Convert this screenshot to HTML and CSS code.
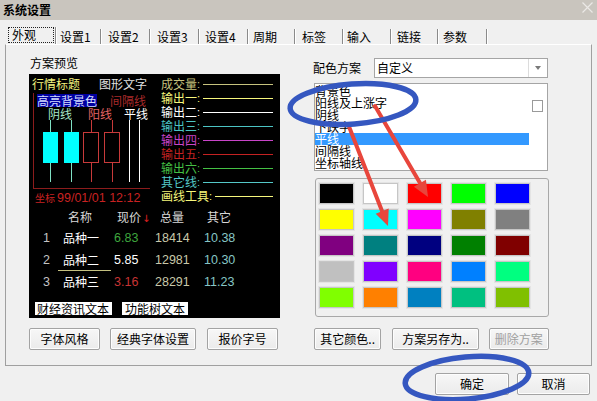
FILE: index.html
```html
<!DOCTYPE html>
<html lang="zh">
<head>
<meta charset="utf-8">
<title>系统设置</title>
<link rel="stylesheet" href="styles.css">
</head>
<body>
<div class="win">
  <div class="titlebar">
    <span class="title">系统设置</span>
    <svg class="close" width="11" height="11" viewBox="0 0 11 11"><path d="M0.5 0.5 L10.5 10.5 M10.5 0.5 L0.5 10.5" stroke="#ebe9e6" stroke-width="1.2" fill="none"/></svg>
  </div>

  <div class="tabs">
    <div class="tab sel"><span class="focus">外观</span></div>
    <div class="tab w45">设置1</div>
    <div class="tab w49 p7">设置2</div>
    <div class="tab w49 p7">设置3</div>
    <div class="tab w49">设置4</div>
    <div class="tab w47 p5">周期</div>
    <div class="tab w48 p7">标签</div>
    <div class="tab w48 p4">输入</div>
    <div class="tab w47">链接</div>
    <div class="tab w49 p5">参数</div>
  </div>

  <div class="panel">
    <div class="col left">
      <div class="lbl">方案预览</div>
      <div class="preview">
        <div class="top">
          <div class="chartcol">
            <div class="hdr"><span class="t1">行情标题</span><span class="t2">图形文字</span></div>
            <div class="frame">
              <div class="frow1"><span class="hl">高亮背景色</span><span class="gapl">间隔线</span></div>
              <div class="frow2"><span class="yin">阴线</span><span class="yang">阳线</span><span class="ping">平线</span></div>
              <svg class="candles" width="116" height="67" viewBox="0 0 116 67">
                <g stroke="#7fe0c4" stroke-width="1">
                  <line x1="16.5" y1="0" x2="16.5" y2="62"/>
                  <line x1="37.5" y1="0" x2="37.5" y2="62"/>
                </g>
                <rect x="9" y="12" width="15" height="31" fill="#00ffff"/>
                <rect x="30" y="12" width="15" height="31" fill="#00ffff"/>
                <g stroke="#c83a3a" stroke-width="1" fill="none">
                  <line x1="57.5" y1="0" x2="57.5" y2="12"/>
                  <line x1="57.5" y1="43" x2="57.5" y2="62"/>
                  <line x1="78.5" y1="0" x2="78.5" y2="12"/>
                  <line x1="78.5" y1="43" x2="78.5" y2="62"/>
                  <rect x="49.5" y="12.5" width="15" height="30"/>
                  <rect x="70.5" y="12.5" width="15" height="30"/>
                </g>
                <g stroke="#ffffff" stroke-width="1">
                  <line x1="95.5" y1="0" x2="95.5" y2="62"/>
                  <line x1="105.5" y1="0" x2="105.5" y2="62"/>
                </g>
              </svg>
            </div>
            <div class="coord"><span class="zb">坐标</span><span class="num">99/01/01 12:12</span></div>
          </div>
          <div class="legend">
            <div class="lrow c-vol"><span>成交量</span><span class="colon">:</span><span class="ln"></span></div>
            <div class="lrow c-o1"><span>输出一</span><span class="colon">:</span><span class="ln"></span></div>
            <div class="lrow c-o2"><span>输出二</span><span class="colon">:</span><span class="ln"></span></div>
            <div class="lrow c-o3"><span>输出三</span><span class="colon">:</span><span class="ln"></span></div>
            <div class="lrow c-o4"><span>输出四</span><span class="colon">:</span><span class="ln"></span></div>
            <div class="lrow c-o5"><span>输出五</span><span class="colon">:</span><span class="ln"></span></div>
            <div class="lrow c-o6"><span>输出六</span><span class="colon">:</span><span class="ln"></span></div>
            <div class="lrow c-oth"><span>其它线</span><span class="colon">:</span><span class="ln"></span></div>
            <div class="lrow c-draw"><span>画线工具</span><span class="colon">:</span><span class="ln"></span></div>
          </div>
        </div>

        <div class="tbl">
          <div></div>
          <div class="h hn">名称</div>
          <div class="h hp">现价<span class="down">↓</span></div>
          <div class="h hv">总量</div>
          <div class="h ho">其它</div>

          <div class="idx num">1</div>
          <div class="nm">品种一</div>
          <div class="num pr up">6.83</div>
          <div class="num vol">18414</div>
          <div class="num oth">10.38</div>

          <div class="idx num">2</div>
          <div class="nm cur">品种二</div>
          <div class="num pr eq">5.85</div>
          <div class="num vol">12981</div>
          <div class="num oth">10.30</div>

          <div class="idx num">3</div>
          <div class="nm">品种三</div>
          <div class="num pr dn">3.16</div>
          <div class="num vol">28291</div>
          <div class="num oth">11.23</div>
        </div>

        <div class="labels"><span class="tag1">财经资讯文本</span><span class="tag2">功能树文本</span></div>
      </div>
      <div class="btns">
        <button class="btn b71">字体风格</button>
        <button class="btn b86 ml10">经典字体设置</button>
        <button class="btn b71 ml11">报价字号</button>
      </div>
    </div>

    <div class="col right">
      <div class="scheme">
        <span class="slab">配色方案</span>
        <div class="combo"><span class="val">自定义</span><span class="dd"><span class="arrow"></span></span></div>
      </div>
      <div class="list">
        <div class="items">
          <div>背景色</div>
          <div>阳线及上涨字</div>
          <div>阴线</div>
          <div>下跌字</div>
          <div class="on">平线</div>
          <div>间隔线</div>
          <div>坐标轴线</div>
        </div>
        <div class="chk"></div>
      </div>
      <div class="colors">
        <span class="sw" style="background:#000000"></span>
        <span class="sw" style="background:#ffffff"></span>
        <span class="sw" style="background:#ff0000"></span>
        <span class="sw" style="background:#00ff00"></span>
        <span class="sw" style="background:#0000ff"></span>
        <span class="sw" style="background:#ffff00"></span>
        <span class="sw" style="background:#00ffff"></span>
        <span class="sw" style="background:#ff00ff"></span>
        <span class="sw" style="background:#808000"></span>
        <span class="sw" style="background:#808080"></span>
        <span class="sw" style="background:#800080"></span>
        <span class="sw" style="background:#008080"></span>
        <span class="sw" style="background:#000080"></span>
        <span class="sw" style="background:#008000"></span>
        <span class="sw" style="background:#800000"></span>
        <span class="sw" style="background:#c0c0c0"></span>
        <span class="sw" style="background:#8000ff"></span>
        <span class="sw" style="background:#ff0080"></span>
        <span class="sw" style="background:#0080ff"></span>
        <span class="sw" style="background:#00ff80"></span>
        <span class="sw" style="background:#80ff00"></span>
        <span class="sw" style="background:#ff8000"></span>
        <span class="sw" style="background:#0080c0"></span>
        <span class="sw" style="background:#00c080"></span>
        <span class="sw" style="background:#80c000"></span>
      </div>
      <div class="btns rb">
        <button class="btn b68">其它颜色..</button>
        <button class="btn b87 ml11">方案另存为..</button>
        <button class="btn b61 ml10 dis">删除方案</button>
      </div>
    </div>
  </div>

  <div class="footer">
    <button class="btn b74">确定</button>
    <button class="btn b73">取消</button>
  </div>

  <svg class="annot" width="597" height="401" viewBox="0 0 597 401">
    <g stroke="#e8463c" stroke-width="4" stroke-linecap="round" fill="none">
      <line x1="348" y1="124" x2="382" y2="211"/>
      <line x1="375" y1="106" x2="420" y2="183"/>
    </g>
    <g fill="#e8463c">
      <polygon points="388,226 388.7,208.5 375.7,213.7"/>
      <polygon points="428,197 425.9,179.7 413.9,186.7"/>
    </g>
    <g fill="none" stroke="#3557c0" stroke-width="5.5">
      <ellipse cx="353" cy="104" rx="63" ry="20" transform="rotate(-4 353 104)"/>
      <ellipse cx="467" cy="378" rx="62" ry="21" transform="rotate(-5 467 378)"/>
    </g>
  </svg>
</div>
</body>
</html>
```

FILE: styles.css
```css
* { box-sizing: border-box; }
html, body { margin: 0; padding: 0; }
body {
  width: 597px;
  height: 401px;
  overflow: hidden;
  background: #f0f0f0;
  font-family: "Noto Sans CJK SC", sans-serif;
  font-size: 12px;
  line-height: 14px;
  color: #000;
}
.win { position: relative; width: 597px; height: 401px; }

/* title bar */
.titlebar {
  height: 20px;
  background: #c9c5be;
  display: flex;
  justify-content: space-between;
  padding: 0 4px 0 3px;
}
.title { font-weight: bold; line-height: 19px; }
.close { margin-top: 2px; }

/* tabs */
.tabs {
  height: 24px;
  display: flex;
  align-items: flex-end;
  padding-left: 7px;
}
.tab {
  height: 15px;
  line-height: 15px;
  padding-left: 6px;
  border-right: 1px solid #8a8a8a;
  box-shadow: 1px 0 0 #ffffff;
  white-space: nowrap;
}
.tab.p4 { padding-left: 4px; }
.tab.p5 { padding-left: 5px; }
.tab.p7 { padding-left: 7px; }
.tab.w45 { width: 45px; padding-left: 4px; }
.tab.w47 { width: 47px; }
.tab.w48 { width: 48px; }
.tab.w49 { width: 49px; }
.tab.sel {
  width: 49px;
  height: 17px;
  padding: 0 0 0 1px;
}
.focus {
  display: block;
  width: 46px;
  height: 16px;
  line-height: 14px;
  border: 1px dotted #222;
  padding-left: 3px;
}

/* panel */
.panel {
  margin-left: 5px;
  width: 587px;
  height: 322px;
  border: 1px solid #a0a0a0;
  border-top-color: #ffffff;
  padding: 11px 0 0 23px;
  display: flex;
  gap: 33px;
}
.col { display: flex; flex-direction: column; }
.left { width: 251px; }
.right { width: 236px; }
.lbl { line-height: 14px; padding-left: 1px; margin-bottom: 4px; }

/* preview */
.preview {
  height: 244px;
  background: #000;
  padding: 3px 0 0 3px;
  display: flex;
  flex-direction: column;
}
.num { font-family: "Liberation Sans", Arial, sans-serif; font-size: 12.5px; }
.top { display: flex; height: 126px; }
.chartcol { width: 129px; display: flex; flex-direction: column; }
.hdr { height: 14px; line-height: 14px; display: flex; white-space: nowrap; }
.hdr .t1 { color: #f2f27e; }
.hdr .t2 { color: #e2e2e2; margin-left: 19px; }
.frame {
  margin: 2px 0 0 1px;
  width: 117px;
  height: 96px;
  border-left: 1px solid #8c1c1c;
  border-bottom: 1px solid #8c1c1c;
  display: flex;
  flex-direction: column;
}
.frow1 { margin-top: 1px; height: 13px; line-height: 13px; display: flex; white-space: nowrap; }
.hl { margin-left: 3px; background: #0000a0; color: #d4dcff; }
.gapl { margin-left: 13px; color: #a82a2a; }
.frow2 { height: 13px; line-height: 13px; display: flex; white-space: nowrap; }
.yin { margin-left: 14px; color: #a6e6c8; }
.yang { margin-left: 16px; color: #e46464; }
.ping { margin-left: 12px; color: #ffffff; }
.candles { display: block; }
.coord {
  margin: 1px 0 0 3px;
  height: 13px;
  line-height: 13px;
  color: #c82222;
  white-space: nowrap;
}
.coord .zb { font-size: 10px; }
.coord .num { margin-left: 2px; }

.legend { flex: 1; display: flex; flex-direction: column; }
.lrow { height: 14px; line-height: 14px; display: flex; align-items: center; white-space: nowrap; }
.colon { font-family: "Liberation Sans", Arial, sans-serif; font-size: 11px; }
.ln { flex: 1; height: 1px; background: currentColor; margin: 0 7px 0 3px; }
.c-vol { color: #c6c27e; }
.c-o1 { color: #f6f67c; }
.c-o2 { color: #ffffff; }
.c-o3 { color: #4cc4c4; }
.c-o4 { color: #c844c8; }
.c-o5 { color: #c42222; }
.c-o6 { color: #44c044; }
.c-oth { color: #54c8c8; }
.c-draw { color: #f6f67c; }

.tbl {
  margin-top: 7px;
  display: grid;
  grid-template-columns: 20px 51px 39px 51px 1fr;
  grid-template-rows: 21px 22px 22px 22px;
  padding-left: 11px;
  line-height: 14px;
  white-space: nowrap;
}
.h { color: #d8d8d8; }
.hn { padding-left: 5px; }
.hp { padding-left: 3px; }
.hv { padding-left: 7px; }
.ho { padding-left: 3px; }
.down { color: #e02020; font-family: "DejaVu Sans", sans-serif; font-size: 10px; margin-left: 1px; }
.idx { color: #c4c4c4; }
.nm { color: #ffffff; }
.nm.cur {
  margin-left: -5px;
  padding-left: 5px;
  width: 53px;
  height: 18px;
  border-bottom: 1px solid #c4c080;
}
.pr.up { color: #3ea63e; }
.pr.eq { color: #ffffff; }
.pr.dn { color: #c83434; }
.vol { color: #c8c8aa; padding-left: 2px; }
.oth { color: #86c6c6; }

.labels { margin-top: 5px; display: flex; gap: 10px; padding-left: 3px; white-space: nowrap; }
.labels span {
  background: #ffffff;
  color: #000;
  height: 13px;
  line-height: 13px;
}
.tag1 { width: 77px; padding-left: 2px; }
.tag2 { width: 66px; padding-left: 3px; }

/* buttons */
.btns { margin-top: 10px; display: flex; }
.rb { margin-top: 11px; margin-left: 1px; }
.btn {
  height: 22px;
  padding: 0;
  font-family: "Noto Sans CJK SC", sans-serif;
  font-size: 12px;
  line-height: 18px;
  color: #000;
  background: linear-gradient(#f7f7f7, #ebebeb);
  border: 1px solid #a3a3a3;
  border-radius: 2px;
  box-shadow: inset 0 0 0 1px #fdfdfd;
  white-space: nowrap;
}
.btn.dis { color: #a0a0a0; }
.b61 { width: 61px; }
.b68 { width: 68px; }
.b71 { width: 71px; }
.b73 { width: 73px; }
.b74 { width: 74px; }
.b86 { width: 86px; }
.b87 { width: 87px; }
.ml10 { margin-left: 10px; }
.ml11 { margin-left: 11px; }

/* right column */
.scheme { margin-top: 2px; height: 20px; display: flex; align-items: center; }
.slab { width: 61px; line-height: 14px; }
.combo {
  width: 174px;
  height: 20px;
  border: 1px solid #a5a5a5;
  background: #fff;
  display: flex;
}
.combo .val { flex: 1; padding-left: 2px; line-height: 18px; }
.combo .dd {
  width: 19px;
  border-left: 1px solid #dcdcdc;
  display: flex;
  align-items: center;
  justify-content: center;
}
.arrow {
  width: 0;
  height: 0;
  border-top: 4px solid #7a7a7a;
  border-left: 3.5px solid transparent;
  border-right: 3.5px solid transparent;
}
.list {
  margin: 5px 0 0 1px;
  width: 234px;
  height: 88px;
  border: 1px solid #a5a5a5;
  background: #fff;
  display: flex;
  overflow: hidden;
}
.items { width: 214px; padding-top: 1px; }
.items div { height: 12px; line-height: 12px; white-space: nowrap; }
.items .on { background: #3399ff; color: #fff; }
.chk {
  width: 11px;
  height: 12px;
  border: 1px solid #9a9a9a;
  background: #fff;
  margin: 16px 0 0 3px;
}
.colors {
  margin: 7px 0 0 2px;
  width: 234px;
  height: 139px;
  border: 1px solid #a8a8a8;
  border-radius: 3px;
  padding: 4px 0 0 3px;
  display: grid;
  grid-template-columns: repeat(5, 35px);
  grid-auto-rows: 21px;
  column-gap: 9px;
  row-gap: 5px;
  align-content: start;
}
.sw {
  display: block;
  border: 1px solid #c6c6c6;
  box-shadow: 0 0 0 1px #e4e4e4;
}

/* footer */
.footer {
  margin-top: 7px;
  display: flex;
  justify-content: flex-end;
  gap: 8px;
  padding-right: 7px;
}

/* annotation overlay */
.annot { position: absolute; left: 0; top: 0; pointer-events: none; }
```
